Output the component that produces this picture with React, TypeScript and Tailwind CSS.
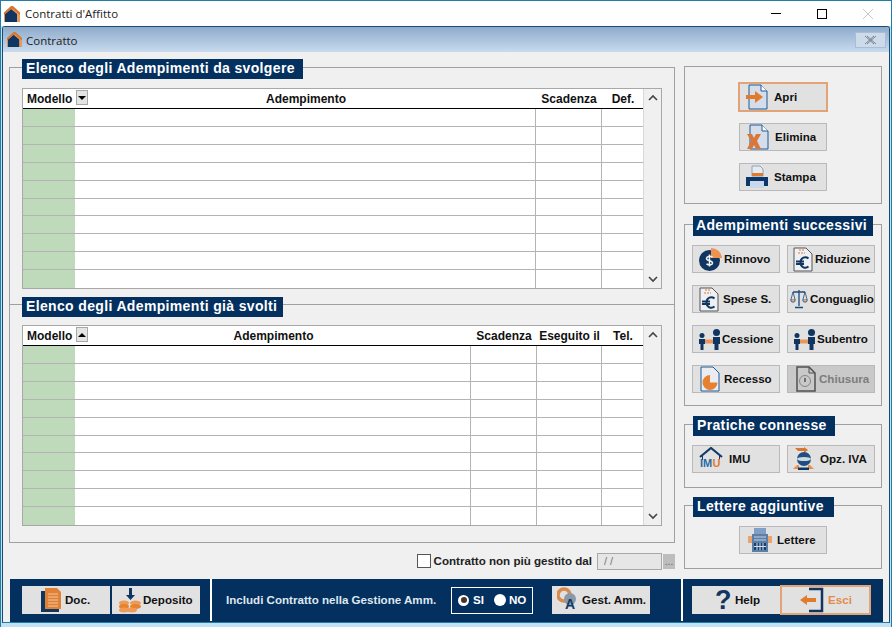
import React from 'react';

const HomeIcon = ({ size = 16 }: { size?: number }) => (
  <svg width={size} height={size} viewBox="0 0 16 16">
    <path d="M0 7 8 0l8 7v9H0z" fill="#e69a62" />
    <path d="M1 8l6-5 6 5v8H1z" fill="#0f3560" />
    <path d="M0 6.500 7 0h2l7 6.500V9L8 2.500 0 9z" fill="#d9762f" />
  </svg>
);

const DocShape = ({ children }: { children?: React.ReactNode }) => (
  <svg width="22" height="26" viewBox="0 0 22 26">
    <path d="M3 1h12l6 6v18H3z" fill="#d5dcea" stroke="#1d5a94" />
    <path d="M15 1v6h6" fill="#fff" stroke="#1d5a94" />
    {children}
  </svg>
);

const ApriIcon = () => (
  <DocShape>
    <path d="M0 11h9V7l8 6-8 6v-4H0z" fill="#e07b2e" />
  </DocShape>
);

const EliminaIcon = () => (
  <DocShape>
    <path d="M0 10h5l2 4 2-4h5l-4 7 4 8H9l-2-4-2 4H0l4-8z" fill="#d9773a" />
  </DocShape>
);

const StampaIcon = () => (
  <svg width="22" height="24" viewBox="0 0 22 24">
    <path d="M6 1h8l3 3v7H6z" fill="#e6ebf3" stroke="#8da3bd" />
    <path d="M6 8h11v3H6z" fill="#e07b2e" />
    <path d="M0 12h22v9h-4v-4H4v4H0z" fill="#0c3768" />
    <path d="M4 16h14v7H4z" fill="#c9d8ea" />
  </svg>
);

const RinnovoIcon = () => (
  <svg width="24" height="24" viewBox="0 0 24 24">
    <circle cx="10.500" cy="13.500" r="10.500" fill="#0f3560" />
    <path d="M12 11V1a11 11 0 0 1 11 10z" fill="#ee9252" />
    <path d="M13.500 10c-2.500-1.500-6-.5-6 1.500 0 3 6 1.500 6 4.500 0 2-3 2.500-6 1M10.500 7.500v12" fill="none" stroke="#f3f3f3" strokeWidth="1.500" />
  </svg>
);

const EuroDocIcon = () => (
  <svg width="20" height="25" viewBox="0 0 20 25">
    <path d="M1 1h12l6 6v17H1z" fill="#eef0f4" stroke="#555" />
    <path d="M6 3h6M5 6h7" stroke="#e07b2e" strokeDasharray="2 1" />
    <path d="M15.500 11.500c-3-2.500-8-1-8 4s5 6.500 8 4M3 14.500h8M3 17h8" fill="none" stroke="#0f3560" strokeWidth="2" />
  </svg>
);

const BilanciaIcon = () => (
  <svg width="18" height="20" viewBox="0 0 18 20" fill="none" stroke="#1d4a7c">
    <path d="M9 1v16M5 18.500h8M3 3h12" strokeWidth="1.300" />
    <path d="M3 3 .8 11h4.400zM15 3l-2.200 8h4.400z" strokeWidth=".8" />
    <path d="M.8 11a2.200 2.200 0 0 0 4.400 0M12.800 11a2.200 2.200 0 0 0 4.400 0" fill="#e9a878" strokeWidth=".8" />
  </svg>
);

const PersoneIcon = () => (
  <svg width="23" height="21" viewBox="0 0 23 21">
    <circle cx="4" cy="6.500" r="2.500" fill="#0f3560" />
    <path d="M1 10h6v5H5.500v6h-3v-6H1z" fill="#0f3560" />
    <circle cx="18.500" cy="3.500" r="3.500" fill="#0f3560" />
    <path d="M15 8h7v7h-1.500v6h-4v-6H15z" fill="#0f3560" />
    <path d="M7 10.500h8v4H7z" fill="#e8975c" />
  </svg>
);

const RecessoIcon = () => (
  <svg width="20" height="26" viewBox="0 0 20 26">
    <path d="M1 1h12l6 6v18H1z" fill="#e9edf3" stroke="#1d5a94" />
    <path d="M10 9a7.500 7.500 0 1 0 7.500 7.500H10z" fill="#e8812f" />
  </svg>
);

const ChiusuraIcon = () => (
  <svg width="20" height="26" viewBox="0 0 20 26" fill="none" stroke="#333">
    <path d="M1 1h12l6 6v18H1z" strokeWidth="1.500" />
    <path d="M13 1v6h6" />
    <circle cx="9" cy="15" r="5.500" stroke="#777" />
    <path d="M9 12v4" strokeWidth="1.500" />
  </svg>
);

const ImuIcon = () => (
  <svg width="24" height="24" viewBox="0 0 24 24">
    <path d="M1 10 12 1l11 9" fill="none" stroke="#123b68" strokeWidth="2.200" />
    <path d="M3.500 9v4M20.500 9v4" stroke="#123b68" />
    <text x="1" y="20" fontFamily="Liberation Sans, sans-serif" fontSize="11" fontWeight="700" fill="#2a6aa5">IM</text>
    <text x="13.500" y="20" fontFamily="Liberation Sans, sans-serif" fontSize="11" fontWeight="700" fill="#e07b2e">U</text>
  </svg>
);

const OpzIcon = () => (
  <svg width="23" height="24" viewBox="0 0 23 24">
    <path d="M3 1h9V0l4 3-4 3V4H6z" fill="#d9762f" />
    <circle cx="12" cy="12" r="7" fill="#1f4f80" />
    <ellipse cx="12" cy="12" rx="7" ry="2" fill="#cfd9e4" />
    <path d="M1 22l4-4h2v4zM22 22l-4-4h-2v4z" fill="#ea8f4d" />
    <path d="M6 23h11v-2.500H6z" fill="#0f3560" />
  </svg>
);

const LettereIcon = () => (
  <svg width="24" height="26" viewBox="0 0 24 26">
    <path d="M6 1h12v8H6z" fill="#7f9fc6" />
    <path d="M0 9h24v7H0z" fill="#eaa36a" />
    <path d="M4 7h16v18H4z" fill="#5c7fa8" />
    <path d="M6 10h12M6 13h12" stroke="#c6d4e6" />
    <path d="M6 16h12v7H6z" fill="#17406e" />
    <path d="M9 16v7M12 16v7M15 16v7M6 19.500h12" stroke="#d8e2ef" />
  </svg>
);

const DocIcon = () => (
  <svg width="22" height="26" viewBox="0 0 22 26">
    <path d="M1 4h4v18h14v3H1z" fill="#0f3560" />
    <path d="M5 1h12l4 4v17H5z" fill="#e08136" />
    <path d="M8 7h10M8 10h10M8 13h10M8 16h10M8 19h10" stroke="#f5c79f" />
  </svg>
);

const DepositoIcon = () => (
  <svg width="22" height="25" viewBox="0 0 22 25">
    <path d="M10 0h3v7h3l-4.500 5L7 7h3z" fill="#0f3560" />
    <ellipse cx="5" cy="15" rx="5" ry="2.500" fill="#ee9a58" />
    <ellipse cx="5" cy="18.500" rx="5" ry="2.500" fill="#e5832f" />
    <ellipse cx="5" cy="22" rx="5" ry="2.500" fill="#ee9a58" />
    <ellipse cx="16.500" cy="15" rx="5.500" ry="2.500" fill="#ee9a58" />
    <ellipse cx="16.500" cy="18.500" rx="5.500" ry="2.500" fill="#e5832f" />
    <ellipse cx="13" cy="22" rx="5" ry="2.500" fill="#ee9a58" />
  </svg>
);

const GestIcon = () => (
  <svg width="22" height="26" viewBox="0 0 22 26">
    <circle cx="7" cy="8" r="6" fill="none" stroke="#d98a4d" strokeWidth="3.500" />
    <circle cx="13" cy="12" r="6" fill="#8b98a8" />
    <text x="8" y="22" fontFamily="Liberation Sans, sans-serif" fontSize="14" fontWeight="700" fill="#123b68">A</text>
  </svg>
);

const HelpIcon = () => (
  <span className="text-[27px] leading-none font-bold text-[#0f3560]">?</span>
);

const EsciIcon = () => (
  <svg width="24" height="28" viewBox="0 0 24 28">
    <path d="M9 3h13v22H9" fill="none" stroke="#0f3560" strokeWidth="2.500" />
    <path d="M0 14l7-5v3h9v4H7v3z" fill="#e07b2e" />
  </svg>
);

type BtnProps = {
  label: string;
  icon: React.ReactNode;
  pad: string;
  box: string;
  className?: string;
  textClass?: string;
  disabled?: boolean;
};

const Btn = ({ label, icon, pad, box, className = 'w-[88px] h-[28px] border border-[#b9b9b9]', textClass = 'text-[#111]', disabled }: BtnProps) => (
  <button className={`flex items-center justify-start shrink-0 ${pad} ${disabled ? 'bg-[#c9c9c9]' : 'bg-[#e1e1e1]'} ${className}`}>
    <span className={`flex items-center shrink-0 ${box} ${disabled ? 'opacity-80' : ''}`}>{icon}</span>
    <span className={`text-[11.6px] font-bold whitespace-nowrap ${disabled ? 'text-[#7d7d7d]' : textClass}`}>{label}</span>
  </button>
);

const Legend = ({ title, className }: { title: string; className: string }) => (
  <div className={`absolute bg-[#03305f] text-white h-[20px] pb-[2px] flex items-center text-[14px] font-bold leading-none tracking-[0.35px] ${className}`}>
    {title}
  </div>
);

type Col = { label: string; w: string };

const Grid = ({ cols, sort }: { cols: Col[]; sort: 'up' | 'down' }) => (
  <div className="flex h-[201px] border border-[#a8a8a8] bg-white">
    <div className="flex-1 flex flex-col">
      <div className="flex h-[20px] border-b border-black shrink-0">
        <div className="w-[52px] relative text-[12px] font-bold text-[#111] pl-[4px] flex items-center">
          Modello
          <span className="absolute left-[53px] top-[1px] w-[12px] h-[15px] bg-[#e4e4e4] border border-[#a8a8a8] flex items-center justify-center">
            {sort === 'down' ? (
              <span className="border-x-[4px] border-x-transparent border-t-[4px] border-t-black" />
            ) : (
              <span className="border-x-[4px] border-x-transparent border-b-[4px] border-b-black" />
            )}
          </span>
        </div>
        {cols.map((c) => (
          <div key={c.label} className={`${c.w} pl-[2px] text-[12px] font-bold text-[#111] flex items-center justify-center`}>
            {c.label}
          </div>
        ))}
      </div>
      {Array.from({ length: 10 }).map((_, i) => (
        <div key={i} className="flex h-[18px] border-b border-[#b4b4b4] last:border-b-0">
          <div className="w-[52px] bg-[#bfdabb]" />
          {cols.map((c, j) => (
            <div key={j} className={`${c.w} ${j > 0 ? 'border-l border-[#b4b4b4]' : ''}`} />
          ))}
        </div>
      ))}
    </div>
    <div className="w-[19px] border-l border-[#d8d8d8] bg-[#f0f0f0] flex flex-col justify-between items-center py-[5px]">
      <svg width="10" height="7" viewBox="0 0 10 7" fill="none" stroke="#444" strokeWidth="1.600"><path d="M1 6l4-4 4 4" /></svg>
      <svg width="10" height="7" viewBox="0 0 10 7" fill="none" stroke="#444" strokeWidth="1.600"><path d="M1 1l4 4 4-4" /></svg>
    </div>
  </div>
);

const Group = ({ className, children }: { className: string; children?: React.ReactNode }) => (
  <div className={`relative border border-[#a0a0a0] ${className}`}>{children}</div>
);

export default function App() {
  return (
    <div className="w-[892px] h-[627px] bg-[#bfe3f3] flex flex-col overflow-hidden font-['Liberation_Sans',Arial,sans-serif] border-x-[1px] border-t-[1px] border-[#1f7fa8]">
      <div className="h-[25px] shrink-0 bg-white flex items-center pl-[3px]">
        <HomeIcon />
        <span className="ml-[5px] text-[11.5px] text-[#222] font-['Open_Sans',sans-serif]">Contratti d'Affitto</span>
        <div className="ml-auto flex items-center">
          <div className="w-[46px] flex justify-center"><span className="block w-[10px] h-[1px] bg-black" /></div>
          <div className="w-[46px] flex justify-center"><span className="block w-[10px] h-[10px] border border-black" /></div>
          <div className="w-[46px] flex justify-center">
            <svg width="10" height="10" viewBox="0 0 10 10" stroke="#c9c9c9"><path d="M0 0l10 10M10 0L0 10" /></svg>
          </div>
        </div>
      </div>

      <div className="flex-1 mx-[1px] mb-[4px] border border-[#1d4a6e] border-b-[#1f7fa8] rounded-tl-[3px] rounded-tr-[3px] flex flex-col bg-[#f0f0f0] overflow-hidden">
        <div className="h-[25px] shrink-0 bg-gradient-to-b from-[#8fabcb] to-[#c8dbef] flex items-center pl-[4px]">
          <HomeIcon size={15} />
          <span className="ml-[4px] pt-[2px] text-[11.5px] text-[#222] font-['Open_Sans',sans-serif]">Contratto</span>
          <div className="ml-auto mr-[3px] w-[31px] h-[16px] border border-[#a9bed6] bg-[#cddaea] flex items-center justify-center">
            <svg width="13" height="10" viewBox="0 0 13 10" fill="none" stroke="#77838f"><path d="M1 1l9 8M10 1L1 9M3 1l9 8M12 1L3 9" /></svg>
          </div>
        </div>

        <div className="flex-1 flex flex-col">
          <div className="flex-1 flex pt-[15px] pl-[6px] gap-[9px]">
            <div className="w-[666px] flex flex-col">
              <Group className="h-[238px] px-[12px] pt-[20px]">
                <Legend title="Elenco degli Adempimenti da svolgere" className="left-[12px] top-[-9px] w-[281px] pl-[4px]" />
                <Grid
                  sort="down"
                  cols={[
                    { label: 'Adempimento', w: 'w-[460px]' },
                    { label: 'Scadenza', w: 'w-[66px]' },
                    { label: 'Def.', w: 'w-[42px]' },
                  ]}
                />
              </Group>
              <Group className="h-[238px] border-t-0 px-[12px] pt-[20px]">
                <Legend title="Elenco degli Adempimenti già svolti" className="left-[12px] top-[-8px] w-[261px] pl-[4px]" />
                <Grid
                  sort="up"
                  cols={[
                    { label: 'Adempimento', w: 'w-[395px]' },
                    { label: 'Scadenza', w: 'w-[66px]' },
                    { label: 'Eseguito il', w: 'w-[65px]' },
                    { label: 'Tel.', w: 'w-[42px]' },
                  ]}
                />
              </Group>
              <div className="flex items-center justify-end mt-[9px] h-[18px]">
                <span className="w-[14px] h-[14px] border border-[#555] bg-white" />
                <span className="ml-[3px] text-[11.6px] font-bold text-[#222]">Contratto non più gestito dal</span>
                <span className="ml-[5px] w-[65px] h-[17px] border border-[#a8a8a8] bg-[#e6e6e6] text-[11px] text-[#777] pl-[6px] leading-[15px]">/ /</span>
                <span className="ml-[1px] w-[12px] h-[15px] bg-[#bdbdbd] text-[10px] text-[#666] text-center leading-[15px]">...</span>
              </div>
            </div>

            <div className="w-[198px] flex flex-col -mt-[1px]">
              <Group className="h-[138px] flex flex-col items-center pt-[15px]">
                <Btn label="Apri" icon={<ApriIcon />} pad="pl-[6px]" box="w-[28px]" className="w-[90px] h-[30px] border-2 border-[#e2a377]" />
                <div className="mt-[11px]"><Btn label="Elimina" icon={<EliminaIcon />} pad="pl-[7px]" box="w-[28px]" /></div>
                <div className="mt-[12px]"><Btn label="Stampa" icon={<StampaIcon />} pad="pl-[6px]" box="w-[28px]" /></div>
              </Group>
              <Group className="h-[182px] mt-[20px]">
                <Legend title="Adempimenti successivi" className="left-[8px] top-[-9px] w-[180px] pl-[3px]" />
                <div className="grid grid-cols-[88px_88px] gap-x-[7px] gap-y-[12px] pl-[7px] pt-[20px]">
                  <Btn label="Rinnovo" icon={<RinnovoIcon />} pad="pl-[6px]" box="w-[25px]" />
                  <Btn label="Riduzione" icon={<EuroDocIcon />} pad="pl-[5px]" box="w-[22px]" />
                  <Btn label="Spese S." icon={<EuroDocIcon />} pad="pl-[6px]" box="w-[24px]" />
                  <Btn label="Conguaglio" icon={<BilanciaIcon />} pad="pl-[2px]" box="w-[20px]" />
                  <Btn label="Cessione" icon={<PersoneIcon />} pad="pl-[5px]" box="w-[24px]" />
                  <Btn label="Subentro" icon={<PersoneIcon />} pad="pl-[5px]" box="w-[24px]" />
                  <Btn label="Recesso" icon={<RecessoIcon />} pad="pl-[7px]" box="w-[24px]" />
                  <Btn label="Chiusura" icon={<ChiusuraIcon />} pad="pl-[8px]" box="w-[23px]" disabled />
                </div>
              </Group>
              <Group className="h-[64px] mt-[18px]">
                <Legend title="Pratiche connesse" className="left-[8px] top-[-9px] w-[142px] pl-[4px]" />
                <div className="flex gap-[7px] pl-[7px] pt-[20px]">
                  <Btn label="IMU" icon={<ImuIcon />} pad="pl-[6px]" box="w-[30px]" />
                  <Btn label="Opz. IVA" icon={<OpzIcon />} pad="pl-[4px]" box="w-[28px]" />
                </div>
              </Group>
              <Group className="h-[64px] mt-[17px] flex justify-center pt-[20px]">
                <Legend title="Lettere aggiuntive" className="left-[8px] top-[-9px] w-[141px] pl-[4px]" />
                <Btn label="Lettere" icon={<LettereIcon />} pad="pl-[8px]" box="w-[29px]" />
              </Group>
            </div>
          </div>

          <div className="h-[43px] shrink-0 ml-[7px] mr-[6px] pb-[1px] flex bg-[#03305f]">
            <div className="w-[202px] flex items-center pl-[12px] gap-[2px] border-r-2 border-white">
              <Btn label="Doc." icon={<DocIcon />} pad="pl-[18px]" box="w-[25px]" className="w-[88px] h-[28px]" />
              <Btn label="Deposito" icon={<DepositoIcon />} pad="pl-[7px]" box="w-[24px]" className="w-[88px] h-[28px]" />
            </div>
            <div className="flex-1 flex items-center pl-[14px]">
              <span className="w-[225px] text-[11.6px] font-bold text-[#dfe7f0] whitespace-nowrap">Includi Contratto nella Gestione Amm.</span>
              <div className="w-[82px] h-[27px] border border-white flex items-center pl-[6px]">
                <span className="w-[11px] h-[11px] rounded-full bg-white flex items-center justify-center"><span className="w-[6px] h-[6px] rounded-full bg-[#4a3327]" /></span>
                <span className="text-[11.6px] font-bold text-white ml-[4px] w-[10px]">SI</span>
                <span className="w-[12px] h-[12px] rounded-full bg-white ml-[11px]" />
                <span className="text-[11.6px] font-bold text-white ml-[3px]">NO</span>
              </div>
              <div className="ml-[19px]"><Btn label="Gest. Amm." icon={<GestIcon />} pad="pl-[5px]" box="w-[25px]" className="w-[98px] h-[28px]" /></div>
            </div>
            <div className="w-[202px] flex items-center pl-[9px] border-l-2 border-white">
              <Btn label="Help" icon={<HelpIcon />} pad="pl-[23px]" box="w-[20px]" className="w-[88px] h-[28px]" />
              <Btn label="Esci" icon={<EsciIcon />} pad="pl-[18px]" box="w-[28px]" className="w-[91px] h-[30px] border-2 border-[#e2a377]" textClass="text-[#e58a4a]" />
            </div>
          </div>
        </div>
      </div>
    </div>
  );
}
